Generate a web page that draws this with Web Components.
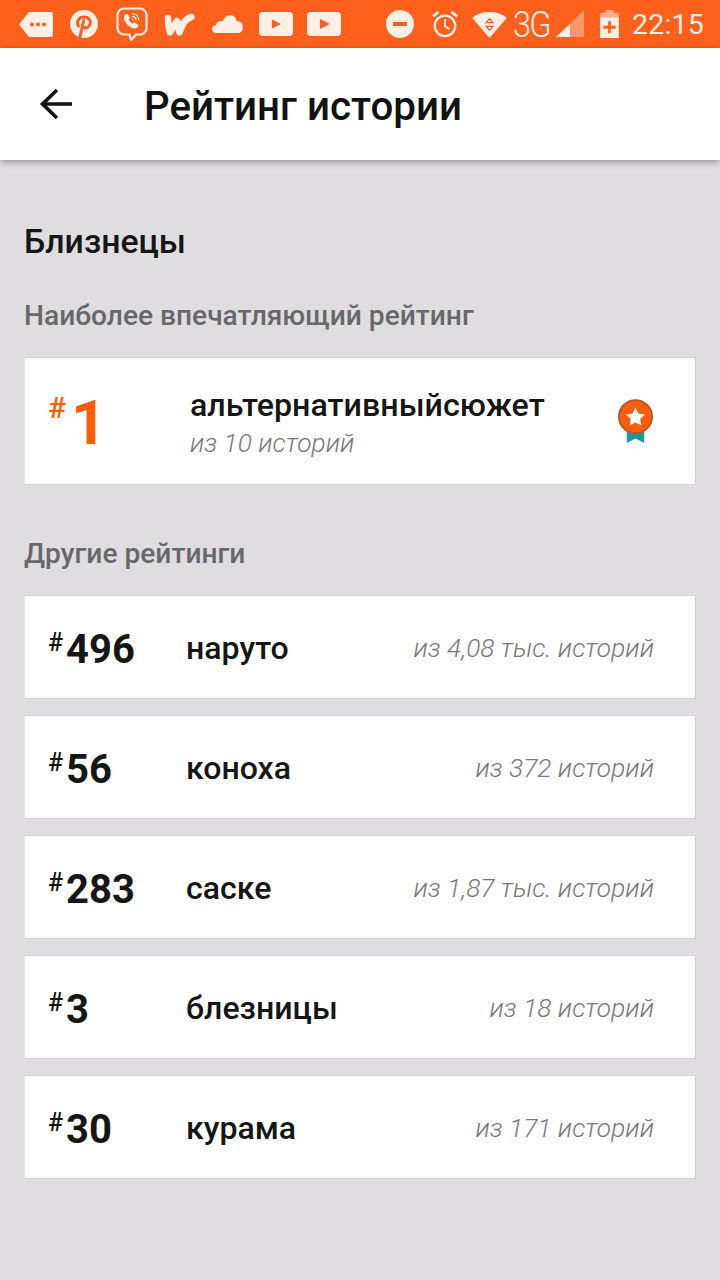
<!DOCTYPE html>
<html lang="ru">
<head>
<meta charset="utf-8">
<title>Рейтинг истории</title>
<style>
  html, body { margin: 0; padding: 0; }
  body { width: 720px; height: 1280px; overflow: hidden; background: #dfdde0; font-family: Roboto, "Noto Sans", sans-serif; }
</style>
</head>
<body>
<status-bar></status-bar>
<app-bar title="Рейтинг истории"></app-bar>
<rank-page>
  <h-title slot="title">Близнецы</h-title>
  <section-label>Наиболее впечатляющий рейтинг</section-label>
  <top-rank rank="1" tag="альтернативныйсюжет" total="из 10 историй"></top-rank>
  <section-label class="second">Другие рейтинги</section-label>
  <rank-row rank="496" tag="наруто" total="из 4,08 тыс. историй"></rank-row>
  <rank-row rank="56" tag="коноха" total="из 372 историй"></rank-row>
  <rank-row rank="283" tag="саске" total="из 1,87 тыс. историй"></rank-row>
  <rank-row rank="3" tag="блезницы" total="из 18 историй"></rank-row>
  <rank-row rank="30" tag="курама" total="из 171 историй"></rank-row>
</rank-page>

<script>
const statusTemplate = document.createElement('template');
statusTemplate.innerHTML = `
<style>
  :host { display: flex; height: 48px; background: #ff601c; color: #fdeee6; align-items: center; justify-content: space-between; padding: 0 16px 0 19px; box-sizing: border-box; }
  .group { display: flex; align-items: center; }
  svg { display: block; flex: none; }
  .time { font: 400 28.500px Roboto, sans-serif; letter-spacing: .2px; margin-left: 13px; }
  .net { font: 300 37px Roboto, sans-serif; letter-spacing: -2px; margin-left: 6px; width: 42px; white-space: nowrap; transform: scaleX(.88); transform-origin: left; }
</style>
<div class="group left">
  <!-- notification icons -->
  <svg width="34" height="25" viewBox="0 0 34 25"><path fill="#fdeee6" d="M10 0h22a2 2 0 0 1 2 2v21a2 2 0 0 1-2 2H10L0 12.500z"/><g fill="#ff601c"><circle cx="13" cy="12.500" r="2"/><circle cx="19" cy="12.500" r="2"/><circle cx="25" cy="12.500" r="2"/></g></svg>
  <svg width="28" height="28" viewBox="0 0 28 28" style="margin-left:17px"><circle cx="14" cy="14" r="14" fill="#fdeee6"/><path fill="none" stroke="#ff601c" stroke-width="3" stroke-linecap="round" d="M8.500 16c-2-3-.8-8.500 5-9 5.200-.4 7.500 3.200 6.600 7-.9 3.800-4.600 5-6.900 3.300M13.700 10.500 10 27"/></svg>
  <svg width="32" height="34" viewBox="0 0 32 34" style="margin-left:18px"><path fill="none" stroke="#fdeee6" stroke-width="2.200" d="M8 1.500h16a6.500 6.500 0 0 1 6.500 6.500v13a6.500 6.500 0 0 1-6.500 6.500h-4l-5 5.500-1.500-5.500H8A6.500 6.500 0 0 1 1.500 21V8A6.500 6.500 0 0 1 8 1.500z"/><path fill="#fdeee6" d="M9 7.500c1-1 2-1 2.800 0l1.800 2.600c.6.900 0 1.600-.9 2.400.7 1.800 2.200 3.300 4 4.200.9-.9 1.600-1.400 2.400-.9l2.700 1.800c.9.700.9 1.800 0 2.700-1.300 1.300-3.100 1.600-4.900.9-4.500-1.800-8-5.300-9-9.800-.2-1.800.7-3 1.100-3.900z"/><path fill="none" stroke="#fdeee6" stroke-width="1.200" d="M16 6.500c3.800 0 6.800 3 6.800 6.800M16 9.300c2.300 0 4 1.700 4 4M16 12c.8 0 1.300.5 1.300 1.300"/></svg>
  <svg width="31" height="23" viewBox="0 0 31 23" style="margin-left:16px"><path fill="none" stroke="#fdeee6" stroke-width="6.500" stroke-linecap="round" stroke-linejoin="round" d="M4 5c0 6 .5 10 2 14.500L13 8l2.500 11.500C18 13 20 6 27.500 4"/></svg>
  <svg width="32" height="20" viewBox="0 0 32 22" preserveAspectRatio="none" style="margin-left:17px"><path fill="#fdeee6" d="M5 21a4.500 4.500 0 0 1-1-9c.6-3 3.400-4.800 6.500-4C12.500 3 16 .5 19.500 1.500c3 .8 4.600 3 5 6 3.500.5 6.500 3 6.500 7 0 3-2 6.500-5 6.500z"/></svg>
  <svg width="34" height="24" viewBox="0 0 34 24" style="margin-left:15px"><rect width="34" height="24" rx="4" fill="#fdeee6"/><path fill="#ff601c" d="M13 7.500v9l9-4.500z"/></svg>
  <svg width="34" height="24" viewBox="0 0 34 24" style="margin-left:14px"><rect width="34" height="24" rx="4" fill="#fdeee6"/><path fill="#ff601c" d="M13 7v10l10-5z"/></svg>
</div>
<div class="group right">
  <svg width="28" height="28" viewBox="0 0 28 28"><circle cx="14" cy="14" r="14" fill="#fdeee6"/><rect x="7" y="12" width="14" height="4" fill="#ff601c"/></svg>
  <svg width="28" height="28" viewBox="0 0 30 30" style="margin-left:17px"><g fill="none" stroke="#fdeee6"><circle cx="15" cy="17" r="11" stroke-width="2.400"/><path stroke-width="2" d="M15 10v7.500l5 3"/><path stroke-width="3" d="M2 7l6-5M28 7l-6-5"/></g></svg>
  <svg width="35" height="27" viewBox="0 0 36 28" style="margin-left:13px"><path fill="#fdeee6" d="M0 7C5 3 11 1 18 1s13 2 18 6L18 28z"/><g fill="none" stroke="#ff601c" stroke-width="1.300"><path d="M14.500 12 18 8l3.500 4zM14.500 16 18 20l3.500-4z"/></g></svg>
  <span class="net">3G</span>
  <svg width="30" height="28" viewBox="0 0 30 28"><path fill="#fdeee6" fill-opacity=".4" d="M29 0v27H15V14z"/><path fill="#fdeee6" d="M15 14v13H1z"/></svg>
  <svg width="19" height="28" viewBox="0 0 20 30" style="margin-left:15px"><path fill="#fdeee6" fill-opacity=".55" d="M6 0h8v3h6v6H0V3h6z"/><path fill="#fdeee6" d="M0 8h20v22H0z"/><path fill="#ff601c" d="M8.500 12h3v5h5v3h-5v5h-3v-5h-5v-3h5z"/></svg>
  <span class="time">22:15</span>
</div>`;

class StatusBar extends HTMLElement {
  constructor() {
    super();
    this.attachShadow({ mode: 'open' }).appendChild(statusTemplate.content.cloneNode(true));
  }
}
customElements.define('status-bar', StatusBar);

const appBarTemplate = document.createElement('template');
appBarTemplate.innerHTML = `
<style>
  :host { display: flex; align-items: center; height: 112px; background: #fff; box-shadow: 0 2px 7px rgba(0,0,0,.35); position: relative; padding-left: 39px; box-sizing: border-box; }
  svg { display: block; flex: none; margin-top: -1px; }
  h1 { margin: 4px 0 0 72px; font: 500 40.300px Roboto, sans-serif; color: #121212; }
</style>
<svg width="33" height="32" viewBox="0 0 33 32"><path fill="none" stroke="#121212" stroke-width="3.600" d="M33 16H3M18 2 3.500 16 18 30"/></svg>
<h1></h1>`;

class AppBar extends HTMLElement {
  constructor() {
    super();
    this.attachShadow({ mode: 'open' }).appendChild(appBarTemplate.content.cloneNode(true));
    this.shadowRoot.querySelector('h1').textContent = this.getAttribute('title');
  }
}
customElements.define('app-bar', AppBar);

const pageTemplate = document.createElement('template');
pageTemplate.innerHTML = `
<style>
  :host { display: block; padding: 64px 24px 0; }
  ::slotted(h-title) { display: block; }
</style>
<slot name="title"></slot>
<slot></slot>`;

class RankPage extends HTMLElement {
  constructor() {
    super();
    this.attachShadow({ mode: 'open' }).appendChild(pageTemplate.content.cloneNode(true));
  }
}
customElements.define('rank-page', RankPage);

class HTitle extends HTMLElement {
  constructor() {
    super();
    this.attachShadow({ mode: 'open' }).innerHTML = `
<style>
  :host { display: block; font: 500 33.800px/36px Roboto, sans-serif; color: #161616; }
</style>
<slot></slot>`;
  }
}
customElements.define('h-title', HTitle);

class SectionLabel extends HTMLElement {
  constructor() {
    super();
    this.attachShadow({ mode: 'open' }).innerHTML = `
<style>
  :host { display: block; font: 500 28.150px/32px Roboto, sans-serif; color: #68676b; margin-top: 40px; margin-bottom: 25px; }
  :host(.second) { margin-top: 53px; margin-bottom: 25px; }
</style>
<slot></slot>`;
  }
}
customElements.define('section-label', SectionLabel);

const topTemplate = document.createElement('template');
topTemplate.innerHTML = `
<style>
  :host { display: flex; align-items: center; height: 128px; box-sizing: border-box; background: #fff; border-top: 1px solid #cfced1; border-right: 1px solid #cfced1; border-bottom: 1px solid #d5d4d7; border-left: 1px solid #e9e8ea; padding-left: 23px; }
  .rank { width: 142px; flex: none; display: flex; align-items: flex-start; color: #ff5c0a; font-weight: 700; height: 62px; }
  .hash { font-size: 30px; line-height: 36px; font-weight: 500; }
  .num { font-size: 62px; line-height: 62px; margin-left: 5px; margin-top: 2px; }
  .body { flex: 1; padding-top: 5px; }
  .tag { font: 500 32.200px/36px Roboto, sans-serif; color: #161616; }
  .total { font: italic 300 26.300px/36px Roboto, sans-serif; color: #77767a; margin-top: 2px; }
  svg { display: block; flex: none; margin-right: 42px; }
</style>
<div class="rank"><span class="hash">#</span><span class="num"></span></div>
<div class="body"><div class="tag"></div><div class="total"></div></div>
<svg width="35" height="45" viewBox="0 0 36 46">
  <path fill="#1a9ba3" d="M9 28h18v17l-9-4.500-9 4.500z"/>
  <circle cx="18" cy="18" r="17" fill="#ff5c0a" stroke="#b5562c" stroke-width="2"/>
  <path fill="#fff" d="M18 8.500l3 6.300 6.800.9-5 4.700 1.300 6.800-6.100-3.300-6.100 3.300 1.300-6.800-5-4.700 6.800-.9z"/>
</svg>`;

class TopRank extends HTMLElement {
  constructor() {
    super();
    this.attachShadow({ mode: 'open' }).appendChild(topTemplate.content.cloneNode(true));
    this.shadowRoot.querySelector('.num').textContent = this.getAttribute('rank');
    this.shadowRoot.querySelector('.tag').textContent = this.getAttribute('tag');
    this.shadowRoot.querySelector('.total').textContent = this.getAttribute('total');
  }
}
customElements.define('top-rank', TopRank);

const rowTemplate = document.createElement('template');
rowTemplate.innerHTML = `
<style>
  :host { display: flex; align-items: center; height: 104px; box-sizing: border-box; background: #fff; border-top: 1px solid #d5d4d7; border-right: 1px solid #cfced1; border-bottom: 1px solid #cfced1; border-left: 1px solid #e9e8ea; padding: 0 41px 0 23px; margin-bottom: 16px; color: #161616; }
  .rank { width: 138px; flex: none; display: flex; align-items: flex-start; font-weight: 700; height: 50px; }
  .hash { font-size: 25px; line-height: 34px; font-weight: 500; margin-top: 4px; }
  .num { font-size: 40px; line-height: 50px; margin-left: 3px; margin-top: 3px; }
  .tag { flex: 1; font: 500 32.100px/46px Roboto, sans-serif; padding-top: 2px; }
  .total { font: italic 300 26.300px/40px Roboto, sans-serif; color: #77767a; padding-top: 2px; }
</style>
<div class="rank"><span class="hash">#</span><span class="num"></span></div>
<div class="tag"></div>
<div class="total"></div>`;

class RankRow extends HTMLElement {
  constructor() {
    super();
    this.attachShadow({ mode: 'open' }).appendChild(rowTemplate.content.cloneNode(true));
    this.shadowRoot.querySelector('.num').textContent = this.getAttribute('rank');
    this.shadowRoot.querySelector('.tag').textContent = this.getAttribute('tag');
    this.shadowRoot.querySelector('.total').textContent = this.getAttribute('total');
  }
}
customElements.define('rank-row', RankRow);
</script>
</body>
</html>
